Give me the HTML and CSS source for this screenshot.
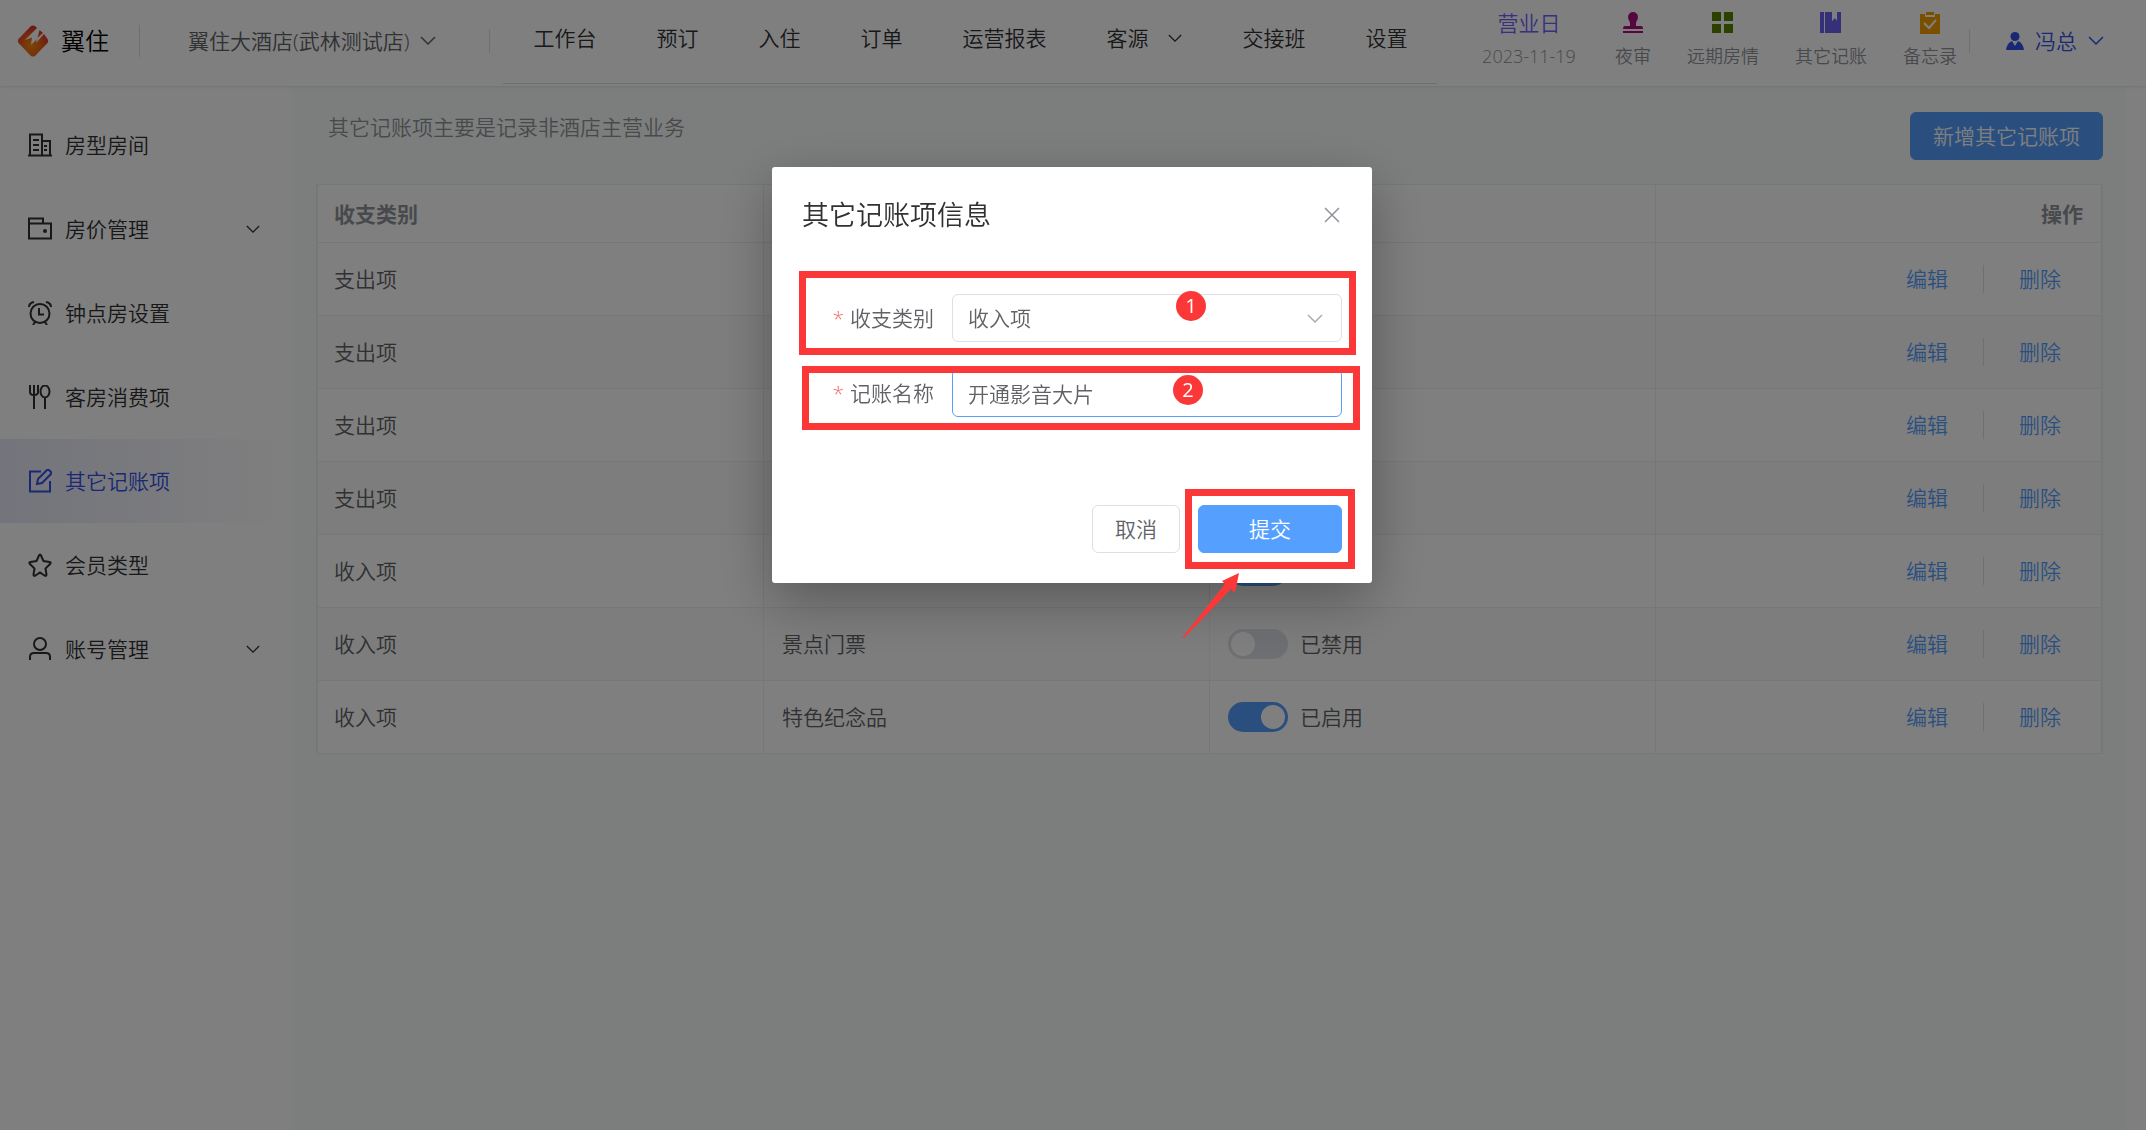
FILE: index.html
```html
<!DOCTYPE html>
<html lang="zh-CN">
<head>
    <meta charset="UTF-8">
    <meta name="viewport" content="width=device-width, initial-scale=1.0">
    <title>翼住</title>
    <link rel="stylesheet" href="styles.css">
</head>
<body>
    <!-- 图标 -->
    <svg class="sprite" aria-hidden="true">
        <symbol id="down" viewBox="0 0 16 10"><path d="M1 1l7 7 7-7" fill="none" stroke="currentColor" stroke-width="1.5"/></symbol>
    </svg>

    <!-- 顶部 -->
    <header class="header">
        <a class="logo" href="#">
            <svg width="32" height="32" viewBox="0 0 32 32">
                <defs>
                    <radialGradient id="logoFill" cx="0.45" cy="0.65" r="0.6">
                        <stop offset="0" stop-color="#f58a10"/>
                        <stop offset="0.5" stop-color="#ee6414"/>
                        <stop offset="1" stop-color="#dc2f38"/>
                    </radialGradient>
                </defs>
                <path d="M14 1Q16 0 18 1L20 3 8 15 15 12.500 14 20 20 14 19 18 27 9 30.500 14Q32 16 30.500 18L18 31Q16 32 14 31L1.500 18Q0 16 1.500 14ZM22.500 5L26 8 20.500 13Z" fill="url(#logoFill)"/>
            </svg>
            <span>翼住</span>
        </a>
        <button class="hotel" type="button">翼住大酒店(武林测试店)<svg class="down"><use href="#down"/></svg></button>
        <nav class="nav">
            <a href="#">工作台</a>
            <a href="#">预订</a>
            <a href="#">入住</a>
            <a href="#">订单</a>
            <a href="#">运营报表</a>
            <a href="#">客源<svg class="down"><use href="#down"/></svg></a>
            <a href="#">交接班</a>
            <a href="#">设置</a>
        </nav>
        <div class="tools">
            <div class="tool date"><b>营业日</b><span>2023-11-19</span></div>
            <a class="tool night" href="#">
                <svg viewBox="0 0 22 22"><path d="M11 0a5 5 0 0 1 5 5c0 3-2 4-2 6v3h5q2 0 2 3H1q0-3 2-3h5v-3c0-2-2-3-2-6a5 5 0 0 1 5-5zM1 19h20v2H1z"/></svg>
                <span>夜审</span>
            </a>
            <a class="tool rooms" href="#">
                <svg viewBox="0 0 22 22"><path d="M0 0h9v9H0zM12 0h9v9h-9zM0 12h9v9H0zM12 12h9v9h-9z"/></svg>
                <span>远期房情</span>
            </a>
            <a class="tool book" href="#">
                <svg viewBox="0 0 22 22"><path d="M0 0h4v21H0zM5 0h7v9l3-3 2 3V0h4v21H5z"/></svg>
                <span>其它记账</span>
            </a>
            <a class="tool memo" href="#">
                <svg viewBox="0 0 22 22"><path d="M1 2h5v3h10V2h5v20H1zM7 0h8v3H7z"/><path d="M5 11l5 5 7-8" fill="none" stroke="#fff" stroke-width="2"/></svg>
                <span>备忘录</span>
            </a>
        </div>
        <button class="user" type="button">
            <svg width="18" height="18" viewBox="0 0 18 18"><circle cx="9" cy="4.500" r="4.500"/><path d="M6 9l3 5 3-5q5 2 6 9H0q1-7 6-9z"/></svg>
            冯总<svg class="down"><use href="#down"/></svg>
        </button>
    </header>

    <div class="page">
        <!-- 左侧菜单 -->
        <aside class="sidebar">
            <a href="#">
                <svg viewBox="0 0 24 24"><path d="M0 22.500h24M2 22V1.500h12V22M14 8h8v14M5 7h6M5 12h6M5 17h6M16 13h3M16 17h3"/></svg>
                房型房间
            </a>
            <a href="#">
                <svg viewBox="0 0 24 24"><path d="M1 6.500h22v15H1zM1 7V1.500h14v5"/><circle cx="17" cy="14" r="1"/></svg>
                房价管理<svg class="down"><use href="#down"/></svg>
            </a>
            <a href="#">
                <svg viewBox="0 0 24 24"><circle cx="12" cy="12.500" r="9.500"/><path d="M11 7v6.500h5M1 6q0-4 5-5M23 6q0-4-5-5M7 21l-2 3M17 21l2 3"/></svg>
                钟点房设置
            </a>
            <a href="#">
                <svg viewBox="0 0 24 24"><path d="M2 0v7q0 3 4 3t4-3V0M6 0v24M17 13v11"/><ellipse cx="17" cy="6.500" rx="4.500" ry="6"/></svg>
                客房消费项
            </a>
            <a class="active" href="#">
                <svg viewBox="0 0 24 24"><path d="M13 2.500H2v20h20V12M9 15l1-5 9-9q1-1 3 1t1 3l-9 9z"/></svg>
                其它记账项
            </a>
            <a href="#">
                <svg viewBox="0 0 24 24"><path d="M12 1.500q.5 0 1 1l2.500 5.500 6 1q2 .5.500 2l-4.500 4.500 1 6q0 2-2 1L12 19.500 7.500 22.500q-2 1-2-1l1-6L2 11q-1.500-1.500.5-2l6-1L11 2.500q.5-1 1-1z"/></svg>
                会员类型
            </a>
            <a href="#">
                <svg viewBox="0 0 24 24"><circle cx="12" cy="7" r="6"/><path d="M2 23v-3q0-4 4-4h12q4 0 4 4v3"/></svg>
                账号管理<svg class="down"><use href="#down"/></svg>
            </a>
        </aside>

        <!-- 列表 -->
        <main class="main">
            <div class="toolbar">
                <p>其它记账项主要是记录非酒店主营业务</p>
                <button class="btn primary" type="button">新增其它记账项</button>
            </div>
            <table class="list">
                <thead>
                    <tr><th>收支类别</th><th></th><th></th><th class="actions">操作</th></tr>
                </thead>
                <tbody>
                    <tr><td>支出项</td><td></td><td></td><td class="actions"><a href="#">编辑</a><a href="#">删除</a></td></tr>
                    <tr><td>支出项</td><td></td><td></td><td class="actions"><a href="#">编辑</a><a href="#">删除</a></td></tr>
                    <tr><td>支出项</td><td></td><td></td><td class="actions"><a href="#">编辑</a><a href="#">删除</a></td></tr>
                    <tr><td>支出项</td><td></td><td></td><td class="actions"><a href="#">编辑</a><a href="#">删除</a></td></tr>
                    <tr><td>收入项</td><td></td><td><label class="switch"><input type="checkbox" aria-label="启用" checked></label></td><td class="actions"><a href="#">编辑</a><a href="#">删除</a></td></tr>
                    <tr><td>收入项</td><td>景点门票</td><td><label class="switch"><input type="checkbox">已禁用</label></td><td class="actions"><a href="#">编辑</a><a href="#">删除</a></td></tr>
                    <tr><td>收入项</td><td>特色纪念品</td><td><label class="switch"><input type="checkbox" checked>已启用</label></td><td class="actions"><a href="#">编辑</a><a href="#">删除</a></td></tr>
                </tbody>
            </table>
        </main>
    </div>

    <!-- 弹窗 -->
    <div class="mask">
        <form class="dialog" role="dialog" aria-labelledby="dialogTitle">
            <div class="dialog-head">
                <h2 id="dialogTitle">其它记账项信息</h2>
                <button class="close" type="button" aria-label="关闭">
                    <svg width="16" height="16" viewBox="0 0 16 16"><path d="M1 1l14 14M15 1L1 15" stroke="currentColor" stroke-width="1.500"/></svg>
                </button>
            </div>
            <div class="field">
                <label for="kind">收支类别</label>
                <div class="select">
                    <select id="kind"><option>收入项</option><option>支出项</option></select>
                    <svg class="down"><use href="#down"/></svg>
                </div>
            </div>
            <div class="field">
                <label for="name">记账名称</label>
                <input class="current" id="name" type="text" value="开通影音大片">
            </div>
            <div class="dialog-foot">
                <button class="btn" type="button">取消</button>
                <button class="btn primary submit" type="submit">提交</button>
            </div>

            <!-- 步骤标注 -->
            <div class="mark mark-kind"></div>
            <div class="mark mark-name"></div>
            <div class="mark mark-submit"></div>
            <span class="step step-kind">1</span>
            <span class="step step-name">2</span>
            <svg class="arrow" width="58" height="68" viewBox="0 0 58 68"><path d="M57 1L53 21 49 17 2 66 0 66 43 12 40 9z"/></svg>
        </form>
    </div>
</body>
</html>
```
FILE: styles.css
```css
* { box-sizing: border-box; }
body {
    margin: 0;
    min-height: 100vh;
    display: flex;
    flex-direction: column;
    font-family: "Open Sans", "Noto Sans CJK SC", sans-serif;
    font-size: 21px;
    font-weight: 350;
    line-height: 30px;
    color: #303133;
    background: #fff;
}
a { color: inherit; text-decoration: none; }
button, input, select { font: inherit; color: inherit; }
button { cursor: pointer; }
.sprite { display: none; }
.down { width: 16px; height: 10px; flex: none; }

/* 顶部 */
.header {
    display: flex;
    align-items: center;
    height: 86px;
    padding: 0 42px 4px 17px;
    box-shadow: 0 1px 3px rgba(0, 0, 0, 0.1);
    position: relative;
}
.logo {
    display: flex;
    align-items: center;
    gap: 12px;
    padding-right: 30px;
    font-size: 24px;
    line-height: 24px;
    color: #000;
    border-right: 1px solid #dcdfe6;
}
.hotel, .user {
    display: flex;
    align-items: center;
    gap: 11px;
    border: 0;
    background: none;
    line-height: 24px;
}
.hotel { padding: 0 53px 0 48px; color: #606266; border-right: 1px solid #dcdfe6; }
.user { padding: 0 0 0 36px; color: #3350e8; border-left: 1px solid #dcdfe6; }
.user svg:first-child { fill: currentColor; }
.nav {
    display: flex;
    align-self: flex-end;
    margin: 0 auto 0 13px;
    border-bottom: 1px solid #dcdfe6;
}
.nav a { display: flex; align-items: center; gap: 20px; height: 84px; padding: 0 30px 6px; }
.nav a .down { width: 14px; height: 9px; }
.nav { margin-bottom: -2px; }
.tools { display: flex; gap: 36px; margin-right: 12px; }
.tool { display: flex; flex-direction: column; align-items: center; gap: 8px; font-size: 18px; line-height: 28px; color: #909399; }
.date { min-width: 100px; }
.tool svg { width: 22px; height: 22px; fill: currentColor; }
.tool b { font-size: 21px; font-weight: inherit; line-height: 22px; color: #6c60ff; }
.night svg { color: #ac0f7c; }
.rooms svg { color: #588000; }
.book svg { color: #6c60f0; }
.memo svg { color: #f5a000; }

/* 左侧菜单 */
.page { display: flex; flex: 1; }
.sidebar { width: 292px; padding-top: 17px; }
.sidebar a { display: flex; align-items: center; gap: 13px; height: 84px; padding: 0 32px 0 28px; }
.sidebar svg { width: 24px; height: 24px; fill: none; stroke: currentColor; stroke-width: 2; }
.sidebar .down { width: 14px; height: 9px; margin-left: auto; stroke: none; }
.sidebar .active { color: #3350e8; background: linear-gradient(90deg, #e8eaf8, #fff); }

/* 列表 */
.main { flex: 1; margin-right: 20px; padding: 26px 23px 26px 24px; background: #f9fdfb; }
.toolbar { display: flex; justify-content: space-between; margin-bottom: 24px; padding-left: 12px; color: #909399; }
.toolbar p { margin: 0; }
.btn {
    height: 48px;
    padding: 0 22px;
    border: 1px solid #dcdfe6;
    border-radius: 6px;
    background: #fff;
    color: #606266;
}
.btn.primary { border-color: #559fff; background: #559fff; color: #fff; }
.list {
    width: 100%;
    table-layout: fixed;
    border-spacing: 0;
    border: 1px solid #ebeef5;
    border-width: 1px 1px 0 2px;
    background: #fff;
    color: #606266;
}
.list th, .list td { padding: 0 18px; text-align: left; border: solid #ebeef5; border-width: 0 1px 1px 0; }
.list th:first-child, .list td:first-child { padding-left: 16px; }
.list th { height: 58px; font-weight: 700; color: #909399; }
.list td { height: 73px; }
.list tr:nth-child(even) td { background: #fafafa; }
.list .actions { text-align: right; }
.list td.actions { padding-right: 5px; color: #559fff; }
.actions a { padding: 0 35px; }
.actions a + a { border-left: 1px solid #dcdfe6; }
.switch { display: flex; align-items: center; gap: 12px; }
.switch input {
    appearance: none;
    display: flex;
    width: 60px;
    height: 30px;
    margin: 0;
    padding: 3px;
    border-radius: 15px;
    background: #dcdfe6;
}
.switch input::before { content: ""; width: 24px; height: 24px; border-radius: 50%; background: #fff; }
.switch input:checked { justify-content: flex-end; background: #559fff; }

/* 弹窗 */
.mask { position: fixed; inset: 0; padding: 167px 2px 0 0; background: rgba(0, 0, 0, 0.5); }
.dialog {
    position: relative;
    width: 600px;
    margin: 0 auto;
    padding: 30px;
    border-radius: 3px;
    background: #fff;
    color: #606266;
    box-shadow: 0 18px 54px rgba(0, 0, 0, 0.3);
}
.dialog-head { display: flex; justify-content: space-between; align-items: center; margin-bottom: 61px; }
.dialog-head h2 { margin: 0; font-size: 27px; font-weight: inherit; line-height: 36px; color: #303133; }
.close { display: flex; padding: 0 2px; border: 0; background: none; color: #909399; }
.field { display: flex; align-items: center; justify-content: flex-end; gap: 18px; margin-bottom: 27px; }
.field label::before { content: "*"; margin-right: 6px; color: #f56c6c; }
.field select, .field input {
    appearance: none;
    width: 100%;
    height: 48px;
    padding: 0 15px;
    border: 1px solid #dcdfe6;
    border-radius: 6px;
    background: #fff;
    outline: 0;
}
.field .select, .field input { width: 390px; }
.field .current { border-color: #559fff; }
.select { position: relative; }
.select .down { position: absolute; right: 19px; top: 20px; color: #a8abb2; }
.dialog-foot { display: flex; justify-content: flex-end; gap: 18px; margin-top: 88px; }
.submit { width: 144px; }

/* 步骤标注 */
.mark { position: absolute; border: 7px solid #fc3737; }
.mark-kind { left: 27px; top: 104px; width: 557px; height: 84px; }
.mark-name { left: 30px; top: 199px; width: 558px; height: 64px; }
.mark-submit { left: 413px; top: 322px; width: 170px; height: 80px; }
.step {
    position: absolute;
    width: 30px;
    height: 30px;
    border-radius: 50%;
    background: #fc3737;
    color: #fff;
    font-size: 20px;
    font-weight: 400;
    text-align: center;
}
.step-kind { left: 404px; top: 124px; }
.step-name { left: 401px; top: 208px; }
.arrow { position: absolute; left: 410px; top: 405px; fill: #fc3737; }
```
